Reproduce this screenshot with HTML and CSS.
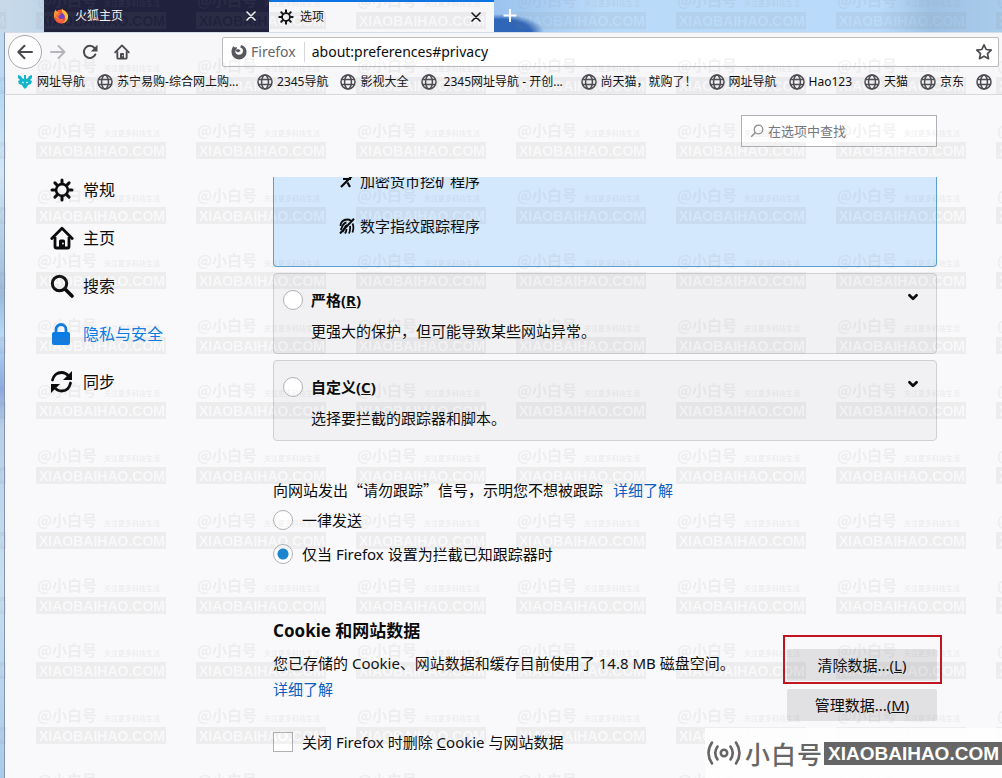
FILE: index.html
```html
<!DOCTYPE html>
<html lang="zh-CN">
<head>
<meta charset="utf-8">
<title>选项</title>
<link rel="stylesheet" href="styles.css">
</head>
<body>
<svg class="sprite" aria-hidden="true">
  <symbol id="globe" viewBox="0 0 16 16"><g fill="none" stroke="#4a4a4f" stroke-width="1.5"><circle cx="8" cy="8" r="7"/><ellipse cx="8" cy="8" rx="3.4" ry="7"/><path d="M1.5 5.6h13M1.5 10.4h13"/></g></symbol>
  <symbol id="gear" viewBox="0 0 24 24"><g fill="none" stroke="currentColor" stroke-linecap="round"><circle cx="12" cy="12" r="5.9" stroke-width="2.6"/><path stroke-width="3" d="M12 2v3M12 19v3M2 12h3M19 12h3M4.9 4.9l2 2M17.1 17.1l2 2M4.9 19.1l2-2M17.1 6.9l2-2"/></g></symbol>
  <symbol id="close" viewBox="0 0 10 10"><path d="M1 1l8 8M9 1L1 9" stroke="currentColor" stroke-width="1.6" stroke-linecap="round"/></symbol>
  <symbol id="home" viewBox="0 0 24 24"><path d="M1.8 12.5L12 2.2l10.200 10.300" fill="none" stroke="currentColor" stroke-width="2.800" stroke-linecap="round" stroke-linejoin="round"/><path d="M5 11v9.500q0 1.500 1.500 1.500h11q1.500 0 1.500-1.500V11" fill="none" stroke="currentColor" stroke-width="2.800"/><path d="M9 22v-7q0-1.500 1.500-1.500h3q1.500 0 1.500 1.500v7z" fill="currentColor"/><circle cx="13" cy="17.500" r=".9" fill="#f9f9fa"/></symbol>
  <symbol id="chevron" viewBox="0 0 10 10"><path d="M2 3.500l3 3 3-3" fill="none" stroke="#0c0c0d" stroke-width="2.200" stroke-linecap="round" stroke-linejoin="round"/></symbol>
</svg>

<div class="window">
  <div class="tabstrip" role="tablist">
    <div class="tab" role="tab">
      <svg class="i16" viewBox="0 0 16 16"><circle cx="8" cy="8.500" r="7" fill="#ff4f3e"/><path d="M9 .5c1 2 5 3 6 7 .6 5-3 8-7 8 4-1 5-4 4-7-1-3-4-4-3-8z" fill="#ffc83a"/><path d="M1 6c0-2 1-4 2-4.500 0 2 1 2.500 3 2.500L5 7l-4 3z" fill="#ff9a2a"/><circle cx="8.200" cy="8.800" r="3.400" fill="#6d3bd0"/><path d="M3 6.500c2-1 4-.5 5 .5-2 0-3 1-2.500 2.500 1 2 4 2 5 .5 0 3-2.500 4-4.500 3.500C3.500 13 2.500 10 3 6.500z" fill="#ff6a35"/></svg>
      <span class="tab-title">火狐主页</span>
      <button class="plain" aria-label="关闭标签页"><svg class="i10"><use href="#close"/></svg></button>
    </div>
    <div class="tab active" role="tab" aria-selected="true">
      <svg class="i16"><use href="#gear"/></svg>
      <span class="tab-title">选项</span>
      <button class="plain" aria-label="关闭标签页"><svg class="i10"><use href="#close"/></svg></button>
    </div>
    <button class="plain newtab" aria-label="新建标签页"><svg class="i16" viewBox="0 0 16 16"><path d="M8 1v13M1.500 7.500h13" stroke="#fff" stroke-width="2"/></svg></button>
  </div>

  <div class="navbar">
    <button class="plain back" aria-label="后退"><svg class="i16" viewBox="0 0 16 16"><path d="M15 8H1.500M7.500 1.800L1.300 8l6.200 6.200" fill="none" stroke="#4a4a4f" stroke-width="2" stroke-linecap="round" stroke-linejoin="round"/></svg></button>
    <button class="plain" aria-label="前进"><svg class="i16" viewBox="0 0 16 16"><path d="M1 8h13.500M8.500 2l6 6-6 6" fill="none" stroke="#b5b5ba" stroke-width="2" stroke-linecap="round" stroke-linejoin="round"/></svg></button>
    <button class="plain" aria-label="刷新"><svg class="i16" viewBox="0 0 16 16"><path d="M13.300 10.500A6 6 0 1 1 12.500 4" fill="none" stroke="#4a4a4f" stroke-width="2" stroke-linecap="round"/><path d="M15.500.8v6.700H8.800z" fill="#4a4a4f"/></svg></button>
    <button class="plain homebtn" aria-label="主页"><svg class="i16"><use href="#home"/></svg></button>
    <div class="urlbar">
      <svg class="i16" viewBox="0 0 16 16"><path d="M2.300 2.300L4 3.500 6 3l-.5 2.500-1.300 1.300C4 9 5.500 10.800 8 10.800c2.300 0 4-1.600 4-3.800 0-2-1.300-3-2.700-3.400L10 1c3.500.8 5.600 3.500 5.600 7A7.500 7.500 0 0 1 .5 8c0-2.200.6-4 1.800-5.700z" fill="#57575c"/><path d="M5.500 5.500C7.500 5 9 5.500 9.500 7L7 8.500 4.500 7z" fill="#57575c"/></svg>
      <span class="identity">Firefox</span>
      <input class="url" aria-label="地址" value="about:preferences#privacy">
      <button class="plain" aria-label="添加书签"><svg class="i18" viewBox="0 0 18 18"><path d="M9 1.800l2.200 4.700 5 .6-3.700 3.500 1 5.100L9 13.200l-4.500 2.500 1-5.100L1.800 7.100l5-.6z" fill="none" stroke="#4a4a4f" stroke-width="1.700" stroke-linejoin="round"/></svg></button>
    </div>
  </div>

  <nav class="bookmarks" aria-label="书签">
    <a href="#"><svg class="i16" viewBox="0 0 16 16"><path d="M1 1l3 1 1 2 2 1V1h2v4l2-1 1-2 3-1v3l-2 2 2 1-1 3-3 1-1 2-2 2-2-2-1-2-3-1-1-3 2-1-2-2z" fill="#12b5c9"/><path d="M5 8l2 1M11 8L9 9" stroke="#f5f6f7"/></svg>网址导航</a>
    <a href="#" class="wide"><svg class="i16"><use href="#globe"/></svg>苏宁易购-综合网上购...</a>
    <a href="#"><svg class="i16"><use href="#globe"/></svg>2345导航</a>
    <a href="#"><svg class="i16"><use href="#globe"/></svg>影视大全</a>
    <a href="#" class="wide"><svg class="i16"><use href="#globe"/></svg>&nbsp;2345网址导航 - 开创...</a>
    <a href="#"><svg class="i16"><use href="#globe"/></svg>尚天猫，就购了！</a>
    <a href="#"><svg class="i16"><use href="#globe"/></svg>网址导航</a>
    <a href="#"><svg class="i16"><use href="#globe"/></svg>Hao123</a>
    <a href="#"><svg class="i16"><use href="#globe"/></svg>天猫</a>
    <a href="#"><svg class="i16"><use href="#globe"/></svg>京东</a>
    <a href="#" aria-label="书签"><svg class="i16"><use href="#globe"/></svg></a>
  </nav>

  <div class="page">
    <nav class="categories" aria-label="分类">
      <a href="#"><svg class="i24"><use href="#gear"/></svg>常规</a>
      <a href="#"><svg class="i24"><use href="#home"/></svg>主页</a>
      <a href="#"><svg class="i24" viewBox="0 0 24 24"><circle cx="9.500" cy="9.500" r="7.200" fill="none" stroke="currentColor" stroke-width="3"/><path d="M15 15l7 7" stroke="currentColor" stroke-width="3.600" stroke-linecap="round"/></svg>搜索</a>
      <a href="#" class="selected"><svg class="i24" viewBox="0 0 24 24"><rect x="2" y="10" width="18" height="13" rx="2" fill="currentColor"/><path d="M6 11V7.500a5 5 0 0 1 10 0V11" fill="none" stroke="currentColor" stroke-width="2.800"/></svg>隐私与安全</a>
      <a href="#"><svg class="i24" viewBox="0 0 24 24"><g fill="none" stroke="currentColor" stroke-width="2.800" stroke-linecap="round"><path d="M2.500 10C3.500 5.500 7 2.500 11.500 2.500c3 0 5.500 1.500 7.500 4"/><path d="M20.500 13c-1 5-4.500 8-9 8-3 0-5.500-1.500-7.500-4"/></g><path d="M22 1v9h-9z" fill="currentColor"/><path d="M1 23v-9h9z" fill="currentColor"/></svg>同步</a>
    </nav>

    <main class="main">
      <label class="search">
        <svg class="i14" viewBox="0 0 14 14"><circle cx="8.500" cy="5.500" r="4.300" fill="none" stroke="#8a8a8e" stroke-width="1.200"/><path d="M5.400 8.600L1.200 12.800" stroke="#8a8a8e" stroke-width="1.400"/></svg>
        <input type="search" placeholder="在选项中查找" aria-label="在选项中查找">
      </label>

      <div class="pane">
        <section class="card standard">
          <div class="blocked"><svg class="i16" viewBox="0 0 16 16"><path d="M2 14L13 3M4 6h8M8.500 9.500L11 14" fill="none" stroke="#0c0c0d" stroke-width="2.200"/></svg>加密货币挖矿程序</div>
          <div class="blocked"><svg class="i16" viewBox="0 0 16 16"><path d="M1.500 8c0-4 3-6.500 6.500-6.500 2 0 3 .5 4 1.300M1.500 12c2-2 1.500-7 6-7.500M3.500 14C6 11 5 8 8 7M13.500 5.500c1.500 3 1 6 0 9M11 8c.5 3 0 5-1 7.500M7.500 11c0 2-.5 3-1.500 4.500" fill="none" stroke="#0c0c0d" stroke-width="1.800"/><path d="M1 15.500L15 .8" stroke="#0c0c0d" stroke-width="2"/></svg>数字指纹跟踪程序</div>
        </section>

        <section class="card option">
          <input type="radio" name="level" id="strict">
          <label for="strict" class="strong">严格(<u>R</u>)</label>
          <button class="plain" aria-label="展开严格"><svg class="i14"><use href="#chevron"/></svg></button>
          <p class="desc">更强大的保护，但可能导致某些网站异常。</p>
        </section>

        <section class="card option">
          <input type="radio" name="level" id="custom">
          <label for="custom" class="strong">自定义(<u>C</u>)</label>
          <button class="plain" aria-label="展开自定义"><svg class="i14"><use href="#chevron"/></svg></button>
          <p class="desc">选择要拦截的跟踪器和脚本。</p>
        </section>

        <section class="dnt">
          <p class="cjk">向网站发出“请勿跟踪”信号，示明您不想被跟踪<a class="link" href="#">详细了解</a></p>
          <label class="choice"><input type="radio" name="dnt">一律发送</label>
          <label class="choice"><input type="radio" name="dnt" checked>仅当 Firefox 设置为拦截已知跟踪器时</label>
        </section>

        <section class="cookies">
          <div class="info">
            <h2>Cookie 和网站数据</h2>
            <p>您已存储的 Cookie、网站数据和缓存目前使用了 14.8 MB 磁盘空间。</p>
            <p><a href="#">详细了解</a></p>
            <label class="choice"><input type="checkbox"><span>关闭 Firefox 时删除 <u>C</u>ookie 与网站数据</span></label>
          </div>
          <div class="actions">
            <button class="btn highlighted">清除数据...(<u>L</u>)</button>
            <button class="btn">管理数据...(<u>M</u>)</button>
          </div>
        </section>
      </div>
    </main>
  </div>

  <div class="brand">
    <svg class="signal" viewBox="0 0 34 26"><g fill="none" stroke="#666" stroke-width="2.600" stroke-linecap="round"><circle cx="17" cy="13" r="3.200"/><path d="M10.500 6.500q-4.500 6.500 0 13M23.500 6.500q4.500 6.500 0 13M5 2.500q-7 10.500 0 21M29 2.500q7 10.500 0 21"/></g></svg>
    <span class="brand-cn"><span>小</span><span>白</span><span>号</span></span>
    <span class="brand-url">XIAOBAIHAO.COM</span>
  </div>
</div>

<svg class="watermark" aria-hidden="true">
  <defs>
    <mask id="cutout" maskUnits="userSpaceOnUse" x="0" y="20" width="130" height="17">
      <rect y="20" width="130" height="17" fill="#fff"/>
      <text class="mark-url" x="3" y="34">XIAOBAIHAO.COM</text>
    </mask>
    <pattern id="mark" x="36" y="-8" width="160" height="65" patternUnits="userSpaceOnUse">
      <text class="mark-name" x="1" y="14">@小白号</text>
      <text class="mark-note" x="68" y="14">关注更多科技生活</text>
      <rect class="mark-band" y="20" width="130" height="17" mask="url(#cutout)"/>
    </pattern>
  </defs>
  <rect width="100%" height="100%" fill="url(#mark)"/>
</svg>
</body>
</html>
```
FILE: styles.css
```css
* { box-sizing: border-box; }

body {
  margin: 0;
  position: relative;
  min-height: 100vh;
  overflow: hidden;
  font: 15px/20px "Noto Sans", "Noto Sans CJK SC", sans-serif;
  color: #0c0c0d;
  background: linear-gradient(180deg, #c6dbee 0, #b7d8f2 12%, #d3e6f5 22%, #9dbbd8 38%, #b9d8f4 43%, #8fa9dd 50%, #b9cfe8 55%, #c9def0 75%, #aacbe8 100%);
}

p, h2 { margin: 0; }
a { color: #0a5ebf; text-decoration: none; }
svg { flex: none; display: block; }
input, button { font: inherit; color: inherit; }
.sprite { position: absolute; width: 0; height: 0; }
.i10 { width: 10px; height: 10px; }
.i14 { width: 14px; height: 14px; }
.i16 { width: 16px; height: 16px; }
.i18 { width: 18px; height: 18px; }
.i24 { width: 24px; height: 24px; }

.plain {
  display: flex;
  align-items: center;
  justify-content: center;
  padding: 0;
  border: 0;
  background: none;
}

.window { min-height: 100vh; display: flex; flex-direction: column; padding-left: 4px; }

/* Tabs */
.tabstrip {
  display: flex;
  height: 32px;
  margin-left: -4px;
  padding-left: 44px;
  font-size: 12px;
  background:
    radial-gradient(ellipse 44px 18px at 500px 32px, #2f66b8 70%, transparent 100%),
    linear-gradient(90deg, #c8daea 0, #c0d5e8 44px, #9cc4ee 500px, #b9daf9 600px, #b9dafa 880px, #9fc2e4 930px, #a9cbec 100%);
}
.tab {
  display: flex;
  align-items: center;
  gap: 6px;
  width: 225px;
  padding: 0 13px 0 9px;
  color: #f9f9fa;
  background: #20213d;
}
.tab.active { color: #0c0c0d; background: #f7f7f9; border-top: 2px solid #0a74e6; }
.tab-title { flex: 1; }
.newtab { width: 32px; }

/* Toolbar */
.navbar {
  display: flex;
  align-items: center;
  height: 38px;
  padding: 1px 3px 0;
  background: #f7f7f9;
  border-top: 1px solid #d4dce8;
  border-left: 1px solid #8296b4;
}
.navbar > .plain { width: 32px; height: 32px; }
.navbar > .back { width: 34px; height: 34px; border: 1px solid #a9a9ad; border-radius: 50%; background: #fdfdfe; }
.homebtn { color: #4a4a4f; }
.urlbar {
  flex: 1;
  display: flex;
  align-items: center;
  gap: 4px;
  height: 30px;
  margin-left: 84px;
  padding: 0 5px 0 8px;
  font-size: 14px;
  background: #fff;
  border: 1px solid #bcbcc0;
  border-radius: 2px;
}
.identity { padding-right: 8px; color: #66666b; border-right: 1px solid #d7d7db; }
.url { flex: 1; min-width: 0; padding: 0 3px; border: 0; outline: 0; background: none; }

.bookmarks {
  display: flex;
  gap: 12px;
  height: 25px;
  padding-left: 12px;
  overflow: hidden;
  font-size: 12px;
  background: #f7f7f9;
  border-bottom: 1px solid #d9d9dc;
  border-left: 1px solid #8296b4;
}
.bookmarks a { display: flex; flex: none; align-items: center; gap: 4px; color: #0c0c0d; }
.bookmarks .wide { width: 148px; }

/* Preferences page */
.page {
  flex: 1;
  display: flex;
  gap: 40px;
  padding: 20px 65px 0 45px;
  background: #f9f9fb;
  border-left: 1px solid #8296b4;
}
.categories { flex: none; width: 183px; padding-top: 51px; font-size: 16px; }
.categories a { display: flex; align-items: center; gap: 9px; height: 48px; color: #0c0c0d; }
.categories .selected { color: #0a7ce6; }
.main { flex: 1; min-width: 0; display: flex; flex-direction: column; }

.search {
  align-self: flex-end;
  display: flex;
  align-items: center;
  gap: 4px;
  width: 196px;
  height: 32px;
  padding: 0 8px;
  font-size: 13px;
  background: #fff;
  border: 1px solid #b1b1b5;
}
.search input { flex: 1; min-width: 0; padding: 0; border: 0; outline: 0; background: none; }
.search input::placeholder { color: #77777b; opacity: 1; }

.pane { flex: 1; margin: 30px -5px 0 0; padding-right: 5px; overflow: hidden; }
.card { border: 1px solid #d0d0d4; border-radius: 4px; background: #f1f1f3; }
.card + .card { margin-top: 6px; }
.standard {
  padding: 0 65px 30px;
  overflow: hidden;
  border-color: #5b9fd0;
  border-top: 0;
  border-radius: 0 0 4px 4px;
  background: #d3e7fd;
}
.blocked { display: flex; align-items: center; gap: 5px; }
.blocked:first-child { margin-top: -6px; }
.blocked + .blocked { margin-top: 25px; }

.option {
  display: grid;
  grid-template-columns: 20px 1fr auto;
  gap: 11px 8px;
  padding: 16px 16px 12px 9px;
}
.option .plain { height: 14px; }
.option .i14 { padding: 1px; }
.desc { grid-column: 2 / 4; }
.strong { font-weight: 700; }

input[type="radio"], input[type="checkbox"] {
  appearance: none;
  flex: none;
  width: 20px;
  height: 20px;
  margin: 0;
  background: #fff;
  border: 1px solid #b1b1b5;
}
input[type="radio"] { border-radius: 50%; }
input[type="radio"]:checked { background: radial-gradient(circle, #1a85cf 5px, #fff 6px); }

.choice { display: flex; align-items: center; gap: 9px; }
.dnt { padding-top: 39px; }
.dnt .choice { margin-top: 10px; }
.dnt .choice + .choice { margin-top: 14px; }
.cjk { font-family: "Noto Sans CJK SC", sans-serif; }
.link { margin-left: 10px; }

.cookies { display: flex; justify-content: space-between; padding-top: 57px; }
.info { min-width: 0; }
.info h2 { font-size: 17px; line-height: 20px; margin-bottom: 12px; }
.info p + p { margin-top: 6px; }
.info .choice { margin-top: 33px; }
.actions { flex: none; width: 150px; display: flex; flex-direction: column; gap: 8px; padding-top: 28px; }
.btn { height: 32px; padding: 0; border: 0; border-radius: 2px; background: #e1e1e4; }
.highlighted { position: relative; }
.highlighted::after {
  content: "";
  position: absolute;
  inset: -14px -5px -3px -4px;
  border: 2px solid #c0151f;
}

/* Brand badge in the corner of the window */
.brand {
  position: absolute;
  right: 0;
  bottom: 0;
  z-index: 2;
  display: flex;
  align-items: center;
  height: 50px;
  padding-left: 2px;
  color: #666;
  background: rgba(255, 255, 255, .85);
}
.signal { width: 34px; height: 26px; }
.brand-cn { display: flex; gap: 1px; margin: 0 2px 0 4px; font-family: "Noto Sans CJK SC", sans-serif; font-size: 25px; font-weight: 500; }
.brand-url {
  padding: 0 3px 0 4px;
  font: 700 19px/23px "Liberation Sans", sans-serif;
  color: #fff;
  background: #666;
}

/* Repeating watermark */
.watermark { position: absolute; inset: 0; width: 100%; height: 100%; pointer-events: none; }
.mark-name, .mark-note { font-family: "Noto Sans CJK SC", sans-serif; font-weight: 700; fill: rgba(130, 130, 130, .1); }
.mark-name { font-size: 15px; }
.mark-note { font-size: 7px; }
.mark-band { fill: rgba(130, 130, 130, .1); }
.mark-url { font: 700 14px "Liberation Sans", sans-serif; fill: #000; }
```
